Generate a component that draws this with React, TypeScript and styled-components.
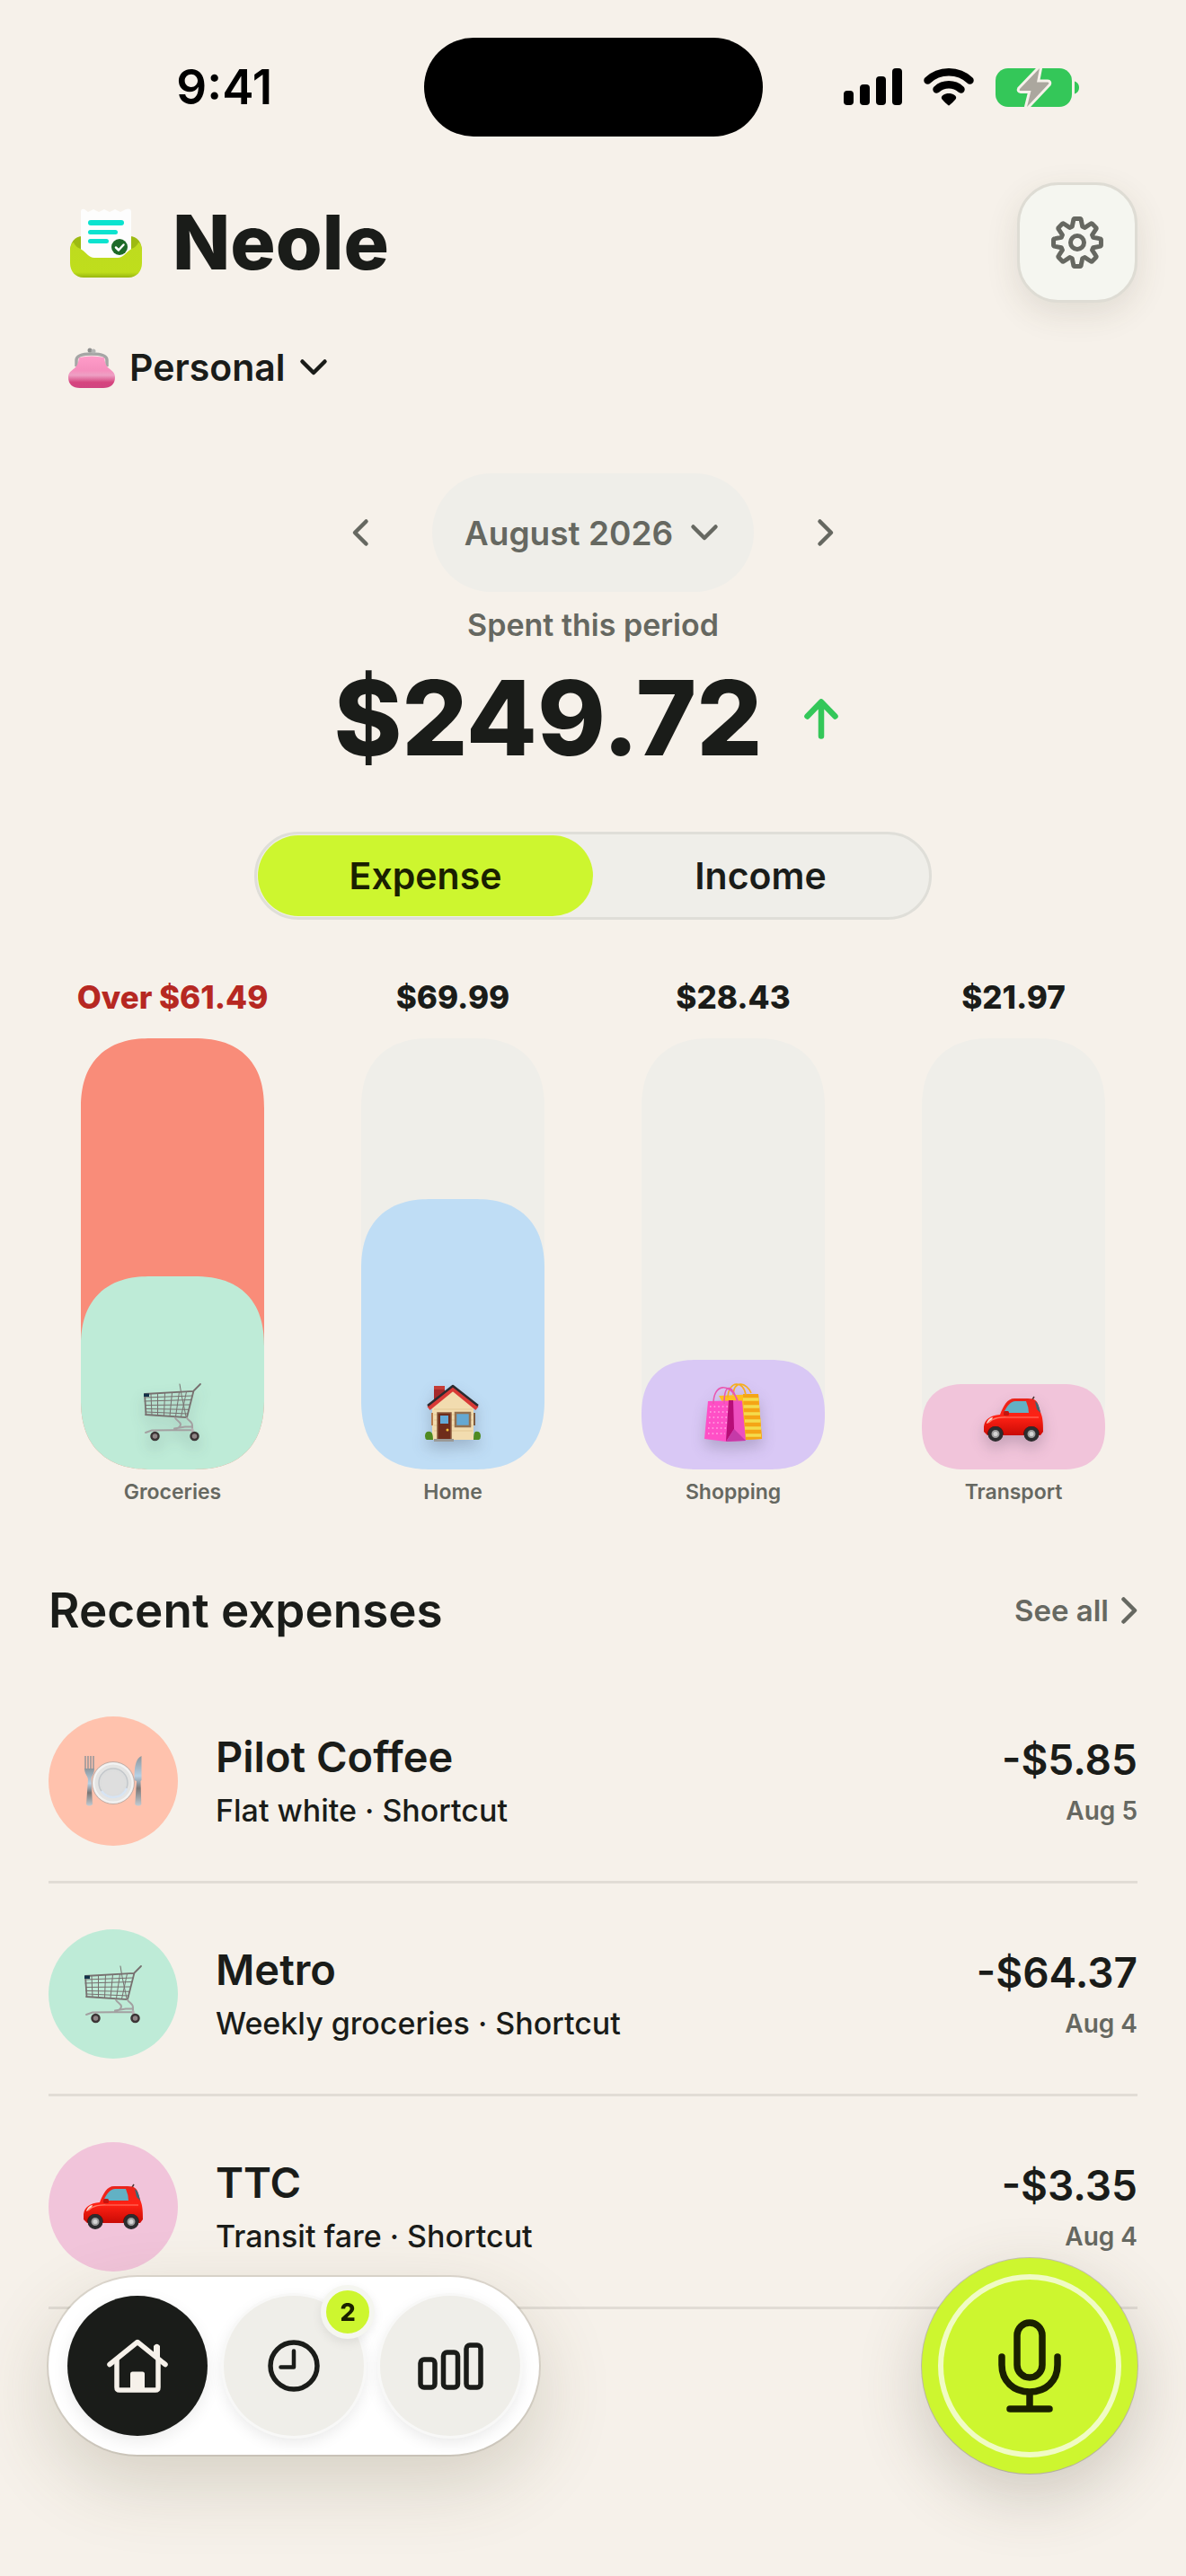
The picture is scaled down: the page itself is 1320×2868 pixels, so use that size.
import React, { useState } from "react";
import styled, { createGlobalStyle, css, ThemeProvider } from "styled-components";

const theme = {
  bg: "#f6f1ea",
  ink: "#1a1c19",
  muted: "#666861",
  surface: "#efeee9",
  line: "#e1dcd5",
  lime: "#cdf62f",
  limeInk: "#1a2000",
  green: "#34c759",
  danger: "#b62822",
  over: "#f98c79",
  mint: "#beebd7",
  sky: "#bfddf5",
  lilac: "#d9c8f5",
  pink: "#f1c4da",
  peach: "#ffc2ad",
};

const GlobalStyle = createGlobalStyle`
  *, *::before, *::after { box-sizing: border-box; }
  body {
    margin: 0;
    background: ${theme.bg};
    color: ${theme.ink};
    font-family: Inter, "Liberation Sans", sans-serif;
    -webkit-font-smoothing: antialiased;
  }
  button { font: inherit; color: inherit; border: 0; padding: 0; background: none; cursor: pointer; }
  a { color: inherit; text-decoration: none; }
  h1, h2, p, ul { margin: 0; padding: 0; }
  ul { list-style: none; }
  svg { display: block; flex: none; overflow: visible; }
`;

/* Continuous corners where the browser has them, plain rounding elsewhere. */
const softCorners = css`
  border-radius: 64px;
  @supports (corner-shape: squircle) {
    border-radius: 78px;
    corner-shape: superellipse(1.25);
  }
`;

/* ---------- layout ---------- */

const Page = styled.div`
  min-height: 100vh;
  padding-bottom: 240px;
`;

const StatusBar = styled.div`
  display: grid;
  grid-template-columns: 1fr auto 1fr;
  align-items: center;
  padding: 42px 28px 0;
`;

const Time = styled.time`
  justify-self: center;
  font-size: 53px;
  font-weight: 600;
  line-height: 64px;
  color: #000;
`;

const Island = styled.div`
  width: 377px;
  height: 110px;
  border-radius: 55px;
  background: #000;
`;

const StatusIcons = styled.div`
  justify-self: center;
  display: flex;
  align-items: center;
  gap: 24px;
`;

const Header = styled.header`
  display: flex;
  align-items: center;
  justify-content: space-between;
  margin-top: 51px;
  padding: 0 54px 0 78px;
`;

const Brand = styled.div`
  display: flex;
  align-items: center;
  gap: 34px;
`;

const BrandName = styled.h1`
  font-size: 84px;
  font-weight: 800;
  line-height: 96px;
`;

const SettingsButton = styled.button`
  display: grid;
  place-items: center;
  width: 134px;
  height: 134px;
  border: 3px solid #dedcd4;
  border-radius: 46px;
  background: #f5f6f0;
  box-shadow: 0 12px 36px rgba(70, 62, 40, 0.12);
`;

const AccountButton = styled.button`
  display: flex;
  align-items: center;
  gap: 16px;
  height: 60px;
  margin: 42px 0 0 76px;
  font-size: 41px;
  font-weight: 600;
`;

const MonthPicker = styled.div`
  display: flex;
  justify-content: center;
  gap: 14px;
  margin-top: 88px;
  color: ${(p) => p.theme.muted};
`;

const StepButton = styled.button`
  display: grid;
  place-items: center;
  width: 132px;
  height: 132px;
`;

const MonthButton = styled.button`
  display: flex;
  align-items: center;
  gap: 20px;
  height: 132px;
  padding: 0 40px 0 36px;
  border-radius: 66px;
  background: ${(p) => p.theme.surface};
  font-size: 37px;
  font-weight: 600;
`;

const Summary = styled.section`
  display: flex;
  flex-direction: column;
  align-items: center;
  margin-top: 15px;
`;

const SummaryLabel = styled.p`
  font-size: 34px;
  font-weight: 600;
  line-height: 44px;
  color: ${(p) => p.theme.muted};
`;

const SummaryRow = styled.div`
  display: flex;
  align-items: center;
  gap: 46px;
  margin-top: 22px;
  padding-right: 16px;
`;

const SummaryAmount = styled.p`
  font-size: 115px;
  font-weight: 800;
  line-height: 120px;
`;

const Segmented = styled.fieldset`
  display: grid;
  grid-template-columns: 1fr 1fr;
  width: 754px;
  max-width: calc(100% - 108px);
  margin: 66px auto 0;
  padding: 1px;
  border: 3px solid #dfded8;
  border-radius: 49px;
  background: ${(p) => p.theme.surface};
`;

const Segment = styled.label`
  display: grid;
  place-items: center;
  height: 90px;
  border-radius: 45px;
  font-size: 41px;
  font-weight: 600;
  cursor: pointer;
  &:has(input:checked) {
    background: ${(p) => p.theme.lime};
    color: ${(p) => p.theme.limeInk};
  }
`;

const SegmentInput = styled.input`
  appearance: none;
  position: absolute;
  width: 1px;
  height: 1px;
  margin: 0;
  opacity: 0;
`;

const Chart = styled.ul`
  display: grid;
  grid-template-columns: repeat(4, 1fr);
  margin-top: 66px;
  padding: 0 36px;
`;

const Column = styled.li`
  display: flex;
  flex-direction: column;
  align-items: center;
`;

const ColumnValue = styled.p<{ $over?: boolean }>`
  font-size: 35px;
  font-weight: 800;
  line-height: 40px;
  white-space: nowrap;
  color: ${(p) => (p.$over ? p.theme.danger : p.theme.ink)};
`;

const Track = styled.div<{ $over?: boolean }>`
  display: flex;
  align-items: flex-end;
  width: 204px;
  height: 480px;
  margin: 26px 0 10px;
  ${softCorners}
  background: ${(p) => (p.$over ? p.theme.over : p.theme.surface)};
`;

const Fill = styled.div<{ $color: string }>`
  display: flex;
  align-items: flex-end;
  justify-content: center;
  width: 100%;
  padding-bottom: 31px;
  ${softCorners}
  background: ${(p) => p.$color};
  svg { filter: drop-shadow(0 8px 8px rgba(40, 40, 60, 0.22)); }
`;

const ColumnName = styled.p`
  font-size: 23px;
  font-weight: 600;
  line-height: 30px;
  color: ${(p) => p.theme.muted};
`;

const SectionHead = styled.div`
  display: flex;
  align-items: center;
  justify-content: space-between;
  margin-top: 81px;
  padding: 0 54px;
`;

const SectionTitle = styled.h2`
  font-size: 53px;
  font-weight: 600;
  line-height: 72px;
`;

const SeeAll = styled.a`
  display: flex;
  align-items: center;
  gap: 14px;
  font-size: 33px;
  font-weight: 600;
  color: ${(p) => p.theme.muted};
`;

const List = styled.ul`
  margin-top: 31px;
  padding: 0 54px;
`;

const Item = styled.li`
  display: grid;
  grid-template-columns: auto 1fr auto;
  align-items: center;
  column-gap: 42px;
  padding: 51px 0 39px;
  border-bottom: 3px solid ${(p) => p.theme.line};
`;

const Avatar = styled.div<{ $color: string }>`
  display: grid;
  place-items: center;
  width: 144px;
  height: 144px;
  border-radius: 50%;
  background: ${(p) => p.$color};
`;

const Stack = styled.div<{ $end?: boolean }>`
  display: flex;
  flex-direction: column;
  align-items: ${(p) => (p.$end ? "flex-end" : "flex-start")};
  padding-top: ${(p) => (p.$end ? "6px" : "0")};
`;

const Merchant = styled.p`
  font-size: 47px;
  font-weight: 600;
  line-height: 66px;
`;

const Note = styled.p`
  font-size: 34px;
  font-weight: 500;
  line-height: 54px;
`;

const Price = styled.p`
  font-size: 46px;
  font-weight: 600;
  line-height: 60px;
`;

const DateText = styled.p`
  font-size: 28px;
  font-weight: 600;
  line-height: 54px;
  color: ${(p) => p.theme.muted};
`;

/* Floating controls that stay over the scrolled list. */
const Dock = styled.div`
  position: fixed;
  left: 54px;
  right: 54px;
  bottom: 114px;
  display: flex;
  align-items: center;
  justify-content: space-between;
  pointer-events: none;
  > * { pointer-events: auto; }
`;

const Tabs = styled.nav`
  display: flex;
  gap: 18px;
  padding: 21px;
  border-radius: 99px;
  background: #fff;
  box-shadow: 0 0 0 2px rgba(60, 55, 40, 0.13), 0 30px 84px rgba(80, 74, 40, 0.2);
`;

const Tab = styled.button<{ $active?: boolean }>`
  position: relative;
  display: grid;
  place-items: center;
  width: 156px;
  height: 156px;
  border-radius: 50%;
  background: ${(p) => (p.$active ? p.theme.ink : p.theme.surface)};
  color: ${(p) => (p.$active ? p.theme.bg : p.theme.ink)};
  box-shadow: ${(p) =>
    p.$active
      ? "0 6px 18px rgba(0, 0, 0, 0.08)"
      : "0 0 0 3px #f8f8f7, 0 6px 18px rgba(0, 0, 0, 0.1)"};
`;

const Badge = styled.span`
  position: absolute;
  top: -12px;
  right: -12px;
  display: grid;
  place-items: center;
  width: 60px;
  height: 60px;
  border: 6px solid #f5f6f0;
  border-radius: 50%;
  background: ${(p) => p.theme.lime};
  color: ${(p) => p.theme.limeInk};
  font-size: 27px;
  font-weight: 800;
  box-shadow: 0 4px 12px rgba(0, 0, 0, 0.08);
`;

const MicButton = styled.button`
  display: grid;
  place-items: center;
  width: 240px;
  height: 240px;
  padding: 18px;
  border-radius: 50%;
  background: ${(p) => p.theme.lime};
  color: ${(p) => p.theme.limeInk};
  box-shadow: 0 0 0 1px rgba(60, 60, 20, 0.25), 0 24px 72px rgba(80, 70, 50, 0.24);
`;

const MicRing = styled.span`
  display: grid;
  place-items: center;
  width: 204px;
  height: 204px;
  border: 6px solid #f0fbc4;
  border-radius: 50%;
`;

/* ---------- line icons ---------- */

type ChevronDir = "down" | "left" | "right";
const chevronPaths: Record<ChevronDir, { w: number; h: number; d: string }> = {
  down: { w: 30, h: 18, d: "M2.500 2.500L15 15 27.500 2.500" },
  left: { w: 18, h: 30, d: "M15.500 2.500L3 15l12.500 12.500" },
  right: { w: 18, h: 30, d: "M2.500 2.500L15 15 2.500 27.500" },
};
const Chevron = ({ dir }: { dir: ChevronDir }) => {
  const c = chevronPaths[dir];
  return (
    <svg width={c.w} height={c.h} viewBox={`0 0 ${c.w} ${c.h}`} fill="none" stroke="currentColor" strokeWidth="4.500" strokeLinecap="round" strokeLinejoin="round" aria-hidden="true">
      <path d={c.d} />
    </svg>
  );
};

const gearPath = (() => {
  const at = (r: number, deg: number) => {
    const a = (deg * Math.PI) / 180;
    return `${(30 + r * Math.sin(a)).toFixed(2)} ${(30 - r * Math.cos(a)).toFixed(2)}`;
  };
  let d = "";
  for (let k = 0; k < 8; k++) {
    const a = k * 45;
    d += `${k ? "L" : "M"}${at(18.6, a - 18)}L${at(25, a - 10)}Q${at(27, a - 9)} ${at(26.6, a - 6)}L${at(26.6, a + 6)}Q${at(27, a + 9)} ${at(25, a + 10)}L${at(18.6, a + 18)}`;
  }
  return d + "Z";
})();

const Gear = () => (
  <svg width="60" height="60" viewBox="0 0 60 60" fill="none" stroke={theme.muted} strokeWidth="5" strokeLinejoin="round" aria-hidden="true">
    <path d={gearPath} />
    <circle cx="30" cy="30" r="7.5" />
  </svg>
);

const Signal = () => (
  <svg width="65" height="42" viewBox="0 0 65 42" aria-hidden="true">
    <rect x="0" y="25" width="11" height="16" rx="4" />
    <rect x="18" y="18" width="11" height="23" rx="4" />
    <rect x="36" y="9" width="11" height="32" rx="4" />
    <rect x="54" y="0" width="11" height="41" rx="4" />
  </svg>
);

const Wifi = () => (
  <svg width="56" height="44" viewBox="0 0 56 44" fill="none" stroke="#000" strokeWidth="8.5" strokeLinecap="round" aria-hidden="true">
    <path d="M4.500 14.500C17 2 39 2 51.500 14.500" />
    <path d="M14.500 24.500C22 17.500 34 17.500 41.500 24.500" />
    <path d="M28 42.500c-1 0-6.500-5.500-7.700-7.200-1.200-2 0-3.500 1.200-4.300 4-2.600 9-2.600 13 0 1.200.8 2.400 2.300 1.200 4.300-1.200 1.700-6.700 7.200-7.700 7.200z" fill="#000" stroke="none" />
  </svg>
);

const Battery = () => (
  <svg width="93" height="44" viewBox="0 0 93 44" aria-hidden="true">
    <rect x="0" y="1" width="85" height="43" rx="14" fill={theme.green} />
    <path d="M88 15.500c3 .8 5 3.600 5 7s-2 6.200-5 7z" fill={theme.green} />
    <path d="M49 1L27 24q-1 2 1 2h11.500L35 44 59 18.500q1-2-1-2H46z" fill="#aba79e" stroke={theme.bg} strokeWidth="6" strokeLinejoin="round" paintOrder="stroke" />
  </svg>
);

const ArrowUp = () => (
  <svg width="38" height="45" viewBox="0 0 38 45" fill="none" stroke={theme.green} strokeWidth="6.5" strokeLinecap="round" strokeLinejoin="round" aria-hidden="true">
    <path d="M19 41.500V4M3.500 19.500L19 3.500l15.500 16" />
  </svg>
);

const HomeIcon = () => (
  <svg width="68" height="60" viewBox="0 0 68 60" fill="none" stroke="currentColor" strokeWidth="5.5" strokeLinecap="round" strokeLinejoin="round" aria-hidden="true">
    <path d="M3 28.500L34 3.500l31 25" />
    <path d="M11 24v30q0 3 3 3h40q3 0 3-3V24" />
    <path d="M52 7.500h7v15l-7-6z" fill="currentColor" stroke="none" />
    <path d="M55.500 8.500v10" />
    <path d="M26 57V39q0-2.500 2.500-2.500h11Q42 36.500 42 39v18z" fill="currentColor" stroke="none" />
  </svg>
);

const ClockIcon = () => (
  <svg width="58" height="58" viewBox="0 0 58 58" fill="none" stroke="currentColor" strokeWidth="5.500" strokeLinecap="round" strokeLinejoin="round" aria-hidden="true">
    <circle cx="29" cy="29" r="26" />
    <path d="M29 12.500v18H14.500" strokeWidth="4.500" />
  </svg>
);

const BarsIcon = () => (
  <svg width="73" height="53" viewBox="0 0 73 53" fill="none" stroke="currentColor" strokeWidth="5.500" aria-hidden="true">
    <rect x="3" y="19" width="16" height="31" rx="4" />
    <rect x="28.500" y="11" width="16" height="39" rx="4" />
    <rect x="54" y="3" width="16" height="47" rx="4" />
  </svg>
);

const MicIcon = () => (
  <svg width="70" height="104" viewBox="0 0 70 104" fill="none" stroke="currentColor" strokeWidth="7.500" strokeLinecap="round" aria-hidden="true">
    <rect x="21" y="4" width="28" height="61" rx="14" />
    <path d="M4 42v9c0 18 13 30 31 30s31-12 31-30v-9M35 81v19M13 100h44" />
  </svg>
);

/* ---------- colour drawings ---------- */

const Logo = () => (
  <svg width="80" height="77" viewBox="0 0 80 77" aria-hidden="true">
    <defs>
      <linearGradient id="logoPocket" x1="0" y1="0" x2="0" y2="1">
        <stop offset="0" stopColor="#bedb1f" />
        <stop offset="0.85" stopColor="#bfde1c" />
        <stop offset="1" stopColor="#98b610" />
      </linearGradient>
    </defs>
    <path d="M0 48C0 38 5 31 14 31h52c9 0 14 7 14 17v4H0z" fill="#9dba12" />
    <path d="M12 4q0-4 4-3l4 3 6-3 6 3 6-3 6 3 6-3 6 3 6-3q6-2 6 3v54H12z" fill="#fdfdfd" />
    <g fill="#0be3cf">
      <rect x="20" y="13" width="40" height="6" rx="3" />
      <rect x="20" y="24" width="33" height="5" rx="2.500" />
      <rect x="20" y="34" width="23" height="5" rx="2.500" />
    </g>
    <path d="M0 48c0-7 2-10 4-10 2 5 6 6 9 8 5 3 8 9 14 9h26c6 0 9-6 14-9 3-2 7-3 9-8 2 0 4 3 4 10v13c0 9-6 16-15 16H15C6 77 0 70 0 61z" fill="url(#logoPocket)" />
    <circle cx="55" cy="43" r="9" fill="#1d6a28" />
    <path d="M51 43.500l3 3 5.500-6" fill="none" stroke="#fff" strokeWidth="2.500" strokeLinecap="round" strokeLinejoin="round" />
  </svg>
);

const Purse = () => (
  <svg width="52" height="45" viewBox="0 0 52 45" aria-hidden="true">
    <defs>
      <linearGradient id="purseBody" x1="0" y1="0" x2="0" y2="1">
        <stop offset="0" stopColor="#ff9cc9" />
        <stop offset="0.45" stopColor="#f58fbd" />
        <stop offset="0.6" stopColor="#eea0c4" />
        <stop offset="0.82" stopColor="#d6457f" />
        <stop offset="1" stopColor="#d04480" />
      </linearGradient>
    </defs>
    <path d="M9 21v-7c0-4 5-7 17-7s17 3 17 7v7" fill="none" stroke="#a5a6a5" strokeWidth="3.500" />
    <circle cx="24" cy="3" r="2.500" fill="#8e8f8e" />
    <circle cx="28" cy="4" r="2.500" fill="#b4b5b4" />
    <path d="M12 11Q26 8 40 11C41 16 41 19 45 23C49 26 52 28 52 33C52 41 47 45 39 45H13C5 45 0 41 0 33C0 28 3 26 7 23C11 19 11 16 12 11Z" fill="url(#purseBody)" />
  </svg>
);

const Cart = () => (
  <svg width="64" height="65" viewBox="0 0 64 65" fill="none" stroke="#77706f" strokeLinecap="round" aria-hidden="true">
    <g strokeWidth="1">
      <path d="M1 16l53-2M1 20l52-1.500M2 24.500l49-.5M2 28.500l48 .8M2 32l47 2M8 12l1 23.500M15.500 11.500l0 24M23.500 11l-1 25M31.500 10.500l-2.500 26M39.500 10l-4 27M47.500 9.500l-6 28M40 1l2 12 5 24" />
    </g>
    <path d="M1 12l54-3.200M2 35l46 3.200M1 12l1.500 23M63 1l-7.500 7.500L48 38" strokeWidth="1.800" />
    <path d="M35 38.500c1 3 6 4 6 7.500 0 3-3 4-6 5M48 38.500c1 3 6 4 6 8.500 0 2-3 1.500-8 1.500l-12 2M54 47v6M2 55l7-2.500 45-.5" stroke="#a3a0a1" strokeWidth="2" />
    <path d="M54 51.500l1 6M12 54v3" stroke="#b5b1b3" strokeWidth="3" />
    <rect x="0" y="11.500" width="6" height="3.500" fill="#123249" stroke="none" />
    <g fill="#8f8586" stroke="#3c3536" strokeWidth="2.500">
      <circle cx="12.500" cy="59" r="4" />
      <circle cx="56.500" cy="59" r="4" />
    </g>
  </svg>
);

const House = () => (
  <svg width="62" height="63" viewBox="0 0 62 63" aria-hidden="true">
    <rect x="10" y="1" width="12" height="19" fill="#a5282a" />
    <path d="M10 1h12v4H10z" fill="#c43d37" />
    <path d="M8 25L31 5l23 20v36H8z" fill="#f2dcaf" />
    <path d="M10 27h43M10 33h43M10 39h43M10 45h43M10 51h43" stroke="#e3c893" strokeWidth="1" />
    <path d="M4 26L31 4l27 22" fill="none" stroke="#d93a36" strokeWidth="5" />
    <path d="M3 23L31 1l28 22" fill="none" stroke="#2b2b30" strokeWidth="2.500" strokeLinejoin="round" />
    <rect x="7" y="31" width="2" height="14" fill="#b87c4d" />
    <rect x="54" y="31" width="2" height="14" fill="#7d5b40" />
    <rect x="14" y="31" width="15" height="30" fill="#6f2c1b" stroke="#8b5a3c" strokeWidth="1.500" />
    <rect x="17" y="34" width="9" height="9" fill="#64a9d6" />
    <circle cx="25" cy="50" r="1.500" fill="#f3c23c" />
    <rect x="34" y="31" width="16" height="15" fill="#65a8d2" stroke="#94714f" strokeWidth="2.500" />
    <path d="M0 57q0-6 6-5 3 1 3 9H2q-2-1-2-4zM62 57q0-6-6-5-2 1-2 9h6q2-1 2-4z" fill="#4f8a20" />
    <rect x="10" y="60" width="22" height="3" fill="#9a9996" />
  </svg>
);

const Bags = () => (
  <svg width="64" height="64" viewBox="0 0 64 64" aria-hidden="true">
    <path d="M16 13l44-2 4 50-20 1z" fill="#ffbe1f" />
    <path d="M43 11h17l4 50-18 1z" fill="#f5a516" />
    <path d="M43 17h17.500M43.500 25h17.600M44 33h18M45 41h17.500M45 49h18M46 57h17" stroke="#f4dc4d" strokeWidth="3.500" />
    <path d="M26 15C27-5 44-4 46 12M32 12C33-5 47-2 52 10" fill="none" stroke="#f5ae20" strokeWidth="1.600" />
    <path d="M4 19l23-.5L24 64 0 61z" fill="#ff4fc6" />
    <path d="M27 18l15 .5L46 63l-22 1z" fill="#ee4fc0" />
    <path d="M27 18h5l1 32-9 14z" fill="#b80d78" />
    <path d="M33 50l13 13-22 1z" fill="#c53aa8" />
    <path d="M6 25h20M6 31h20M5 37h20M5 43h20M4 49h20M4 55h19" stroke="#ffa8e4" strokeWidth="1.600" strokeDasharray="1.600 3" />
    <path d="M10 22C10-1 28-2 37 18M22 22C22 0 30-2 37 20" fill="none" stroke="#e958b0" strokeWidth="1.600" />
  </svg>
);

const Car = () => (
  <svg width="66" height="50" viewBox="0 0 66 50" aria-hidden="true">
    <defs>
      <linearGradient id="carBody" x1="0" y1="0" x2="0" y2="1">
        <stop offset="0" stopColor="#e8251c" />
        <stop offset="0.5" stopColor="#ff2114" />
        <stop offset="1" stopColor="#c90b05" />
      </linearGradient>
    </defs>
    <path d="M53 5l3-5" stroke="#4b3533" strokeWidth="1.500" />
    <path d="M18 20C22 10 26 2 34 2h15c8 0 11 3 12 9l3 9c2 5 2 14 2 19l-3 4H4l-4-4v-6c1-8 7-12 18-13z" fill="url(#carBody)" />
    <path d="M22 18c4-8 8-13 13-13h12q3 7 3 13z" fill="#62b1c4" />
    <path d="M57 5c4 2 5 8 6 13l-4-4z" fill="#3d6673" />
    <path d="M3 30c1-4 4-7 7-7-1 4-4 6-7 7z" fill="#f6dfd5" />
    <path d="M5 29c7-7 16-6 22-6h34" fill="none" stroke="#ff7a68" strokeWidth="1.200" />
    <rect x="22" y="16" width="6" height="5" rx="1.500" fill="#c5140f" />
    <path d="M4 42c0-12 18-12 18 0M44 42c0-12 18-12 18 0" fill="#6e0805" />
    <g fill="#9d9d9d" stroke="#2c2c2e" strokeWidth="4">
      <circle cx="13" cy="41.500" r="6.500" />
      <circle cx="53" cy="41.500" r="6.500" />
    </g>
    <circle cx="13" cy="41.500" r="2.500" fill="#d5d5d5" />
    <circle cx="53" cy="41.500" r="2.500" fill="#d5d5d5" />
  </svg>
);

const Plate = () => (
  <svg width="64" height="56" viewBox="0 0 64 56" aria-hidden="true">
    <defs>
      <linearGradient id="steel" x1="0" y1="0" x2="0" y2="1">
        <stop offset="0" stopColor="#8d969c" />
        <stop offset="0.4" stopColor="#b7d0e4" />
        <stop offset="0.65" stopColor="#7b7776" />
        <stop offset="1" stopColor="#c3cbd2" />
      </linearGradient>
    </defs>
    <path d="M1 0v15M4 0v15M7 0v15M10 0v15" stroke="#8e9297" strokeWidth="1.400" />
    <path d="M0 14h11c0 6-3 8-3.500 12L9 54q-4 3-7 0l2-28C3.500 22 0 20 0 14z" fill="url(#steel)" />
    <path d="M63.500 0v27l-1 1 .8 26q-3 3-7 0L58 28l-2.500-1c0-14 1-24 8-27z" fill="url(#steel)" />
    <circle cx="32" cy="30" r="23.500" fill="#e4e4e3" stroke="#b9a39c" strokeWidth="0.800" />
    <circle cx="32" cy="30" r="21.500" fill="none" stroke="#f3f3f3" strokeWidth="2" />
    <circle cx="32" cy="30" r="16" fill="#dcdddd" stroke="#c3c7cb" strokeWidth="1.500" />
    <path d="M19 39a16 16 0 0 0 28-3" fill="none" stroke="#d7e4f3" strokeWidth="2.500" />
    <circle cx="32" cy="30" r="13" fill="#dedede" />
  </svg>
);

/* ---------- data ---------- */

const TRACK = 480;
const budgets = [
  { name: "Groceries", value: "Over $61.49", over: true, color: theme.mint, fill: 215, Icon: Cart },
  { name: "Home", value: "$69.99", over: false, color: theme.sky, fill: 301, Icon: House },
  { name: "Shopping", value: "$28.43", over: false, color: theme.lilac, fill: 122, Icon: Bags },
  { name: "Transport", value: "$21.97", over: false, color: theme.pink, fill: 95, Icon: Car },
];

const expenses = [
  { name: "Pilot Coffee", note: "Flat white · Shortcut", price: "-$5.85", date: "Aug 5", color: theme.peach, Icon: Plate },
  { name: "Metro", note: "Weekly groceries · Shortcut", price: "-$64.37", date: "Aug 4", color: theme.mint, Icon: Cart },
  { name: "TTC", note: "Transit fare · Shortcut", price: "-$3.35", date: "Aug 4", color: theme.pink, Icon: Car },
];

const kinds = ["Expense", "Income"];

export default function App() {
  const [kind, setKind] = useState("Expense");

  return (
    <ThemeProvider theme={theme}>
      <GlobalStyle />
      <Page>
        <StatusBar>
          <Time>9:41</Time>
          <Island />
          <StatusIcons>
            <Signal />
            <Wifi />
            <Battery />
          </StatusIcons>
        </StatusBar>

        <Header>
          <Brand>
            <Logo />
            <BrandName>Neole</BrandName>
          </Brand>
          <SettingsButton type="button" aria-label="Settings">
            <Gear />
          </SettingsButton>
        </Header>

        <AccountButton type="button">
          <Purse />
          Personal
          <Chevron dir="down" />
        </AccountButton>

        <main>
          <MonthPicker>
            <StepButton type="button" aria-label="Previous month">
              <Chevron dir="left" />
            </StepButton>
            <MonthButton type="button">
              August 2026
              <Chevron dir="down" />
            </MonthButton>
            <StepButton type="button" aria-label="Next month">
              <Chevron dir="right" />
            </StepButton>
          </MonthPicker>

          <Summary>
            <SummaryLabel>Spent this period</SummaryLabel>
            <SummaryRow>
              <SummaryAmount>$249.72</SummaryAmount>
              <ArrowUp />
            </SummaryRow>
          </Summary>

          <Segmented aria-label="Transaction type">
            {kinds.map((k) => (
              <Segment key={k}>
                <SegmentInput type="radio" name="kind" value={k} checked={kind === k} onChange={() => setKind(k)} />
                {k}
              </Segment>
            ))}
          </Segmented>

          <Chart>
            {budgets.map(({ name, value, over, color, fill, Icon }) => (
              <Column key={name}>
                <ColumnValue $over={over}>{value}</ColumnValue>
                <Track $over={over}>
                  <Fill $color={color} style={{ height: `${(fill / TRACK) * 100}%` }}>
                    <Icon />
                  </Fill>
                </Track>
                <ColumnName>{name}</ColumnName>
              </Column>
            ))}
          </Chart>

          <SectionHead>
            <SectionTitle>Recent expenses</SectionTitle>
            <SeeAll href="#all">
              See all
              <Chevron dir="right" />
            </SeeAll>
          </SectionHead>

          <List>
            {expenses.map(({ name, note, price, date, color, Icon }) => (
              <Item key={name}>
                <Avatar $color={color}>
                  <Icon />
                </Avatar>
                <Stack>
                  <Merchant>{name}</Merchant>
                  <Note>{note}</Note>
                </Stack>
                <Stack $end>
                  <Price>{price}</Price>
                  <DateText>{date}</DateText>
                </Stack>
              </Item>
            ))}
          </List>
        </main>

        <Dock>
          <Tabs aria-label="Main">
            <Tab type="button" $active aria-label="Home" aria-current="page">
              <HomeIcon />
            </Tab>
            <Tab type="button" aria-label="History">
              <ClockIcon />
              <Badge>2</Badge>
            </Tab>
            <Tab type="button" aria-label="Reports">
              <BarsIcon />
            </Tab>
          </Tabs>
          <MicButton type="button" aria-label="Record an expense">
            <MicRing>
              <MicIcon />
            </MicRing>
          </MicButton>
        </Dock>
      </Page>
    </ThemeProvider>
  );
}
